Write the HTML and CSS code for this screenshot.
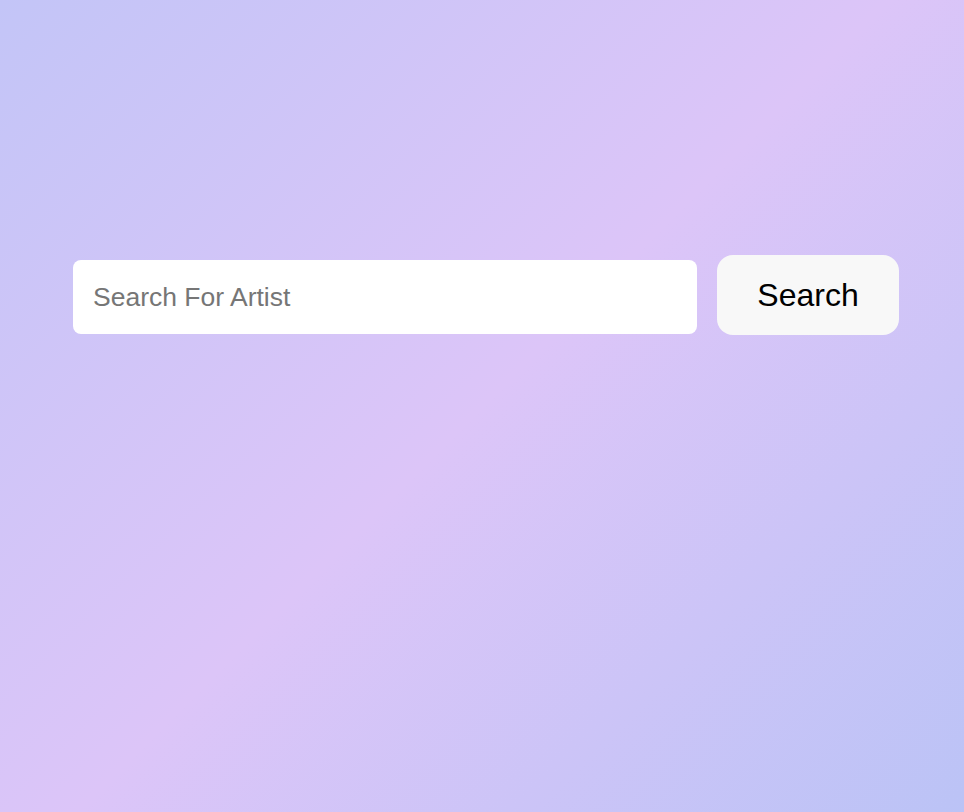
FILE: index.html
```html
<!DOCTYPE html>
<html lang="en">
<head>
<meta charset="utf-8">
<title>Search For Artist</title>
<link rel="stylesheet" href="styles.css">
</head>
<body>
<main class="page">
  <form class="search-form">
    <input class="search-input" type="text" placeholder="Search For Artist">
    <button class="search-button" type="button">Search</button>
  </form>
</main>
</body>
</html>
```
FILE: styles.css
```css
html, body {
  margin: 0;
  padding: 0;
  height: 100%;
}
body {
  background: linear-gradient(135deg, #c3c5f7 0%, #dcc5f8 50%, #bbc3f6 100%);
  font-family: "Liberation Sans", Arial, sans-serif;
}
.page {
  padding: 255px 0 0 73px;
}
.search-form {
  display: flex;
  align-items: baseline;
  gap: 20px;
}
.search-input {
  box-sizing: border-box;
  width: 624px;
  height: 74px;
  padding: 0 20px;
  border: none;
  border-radius: 8px;
  background: #ffffff;
  font-family: "Liberation Sans", Arial, sans-serif;
  font-size: 26.5px;
  color: #222;
  outline: none;
}
.search-input::placeholder {
  color: #767676;
}
.search-button {
  box-sizing: border-box;
  width: 182px;
  height: 80px;
  border: none;
  border-radius: 16px;
  background: #f8f8f8;
  font-family: "Liberation Sans", Arial, sans-serif;
  font-size: 32px;
  color: #000;
  cursor: pointer;
}
```
